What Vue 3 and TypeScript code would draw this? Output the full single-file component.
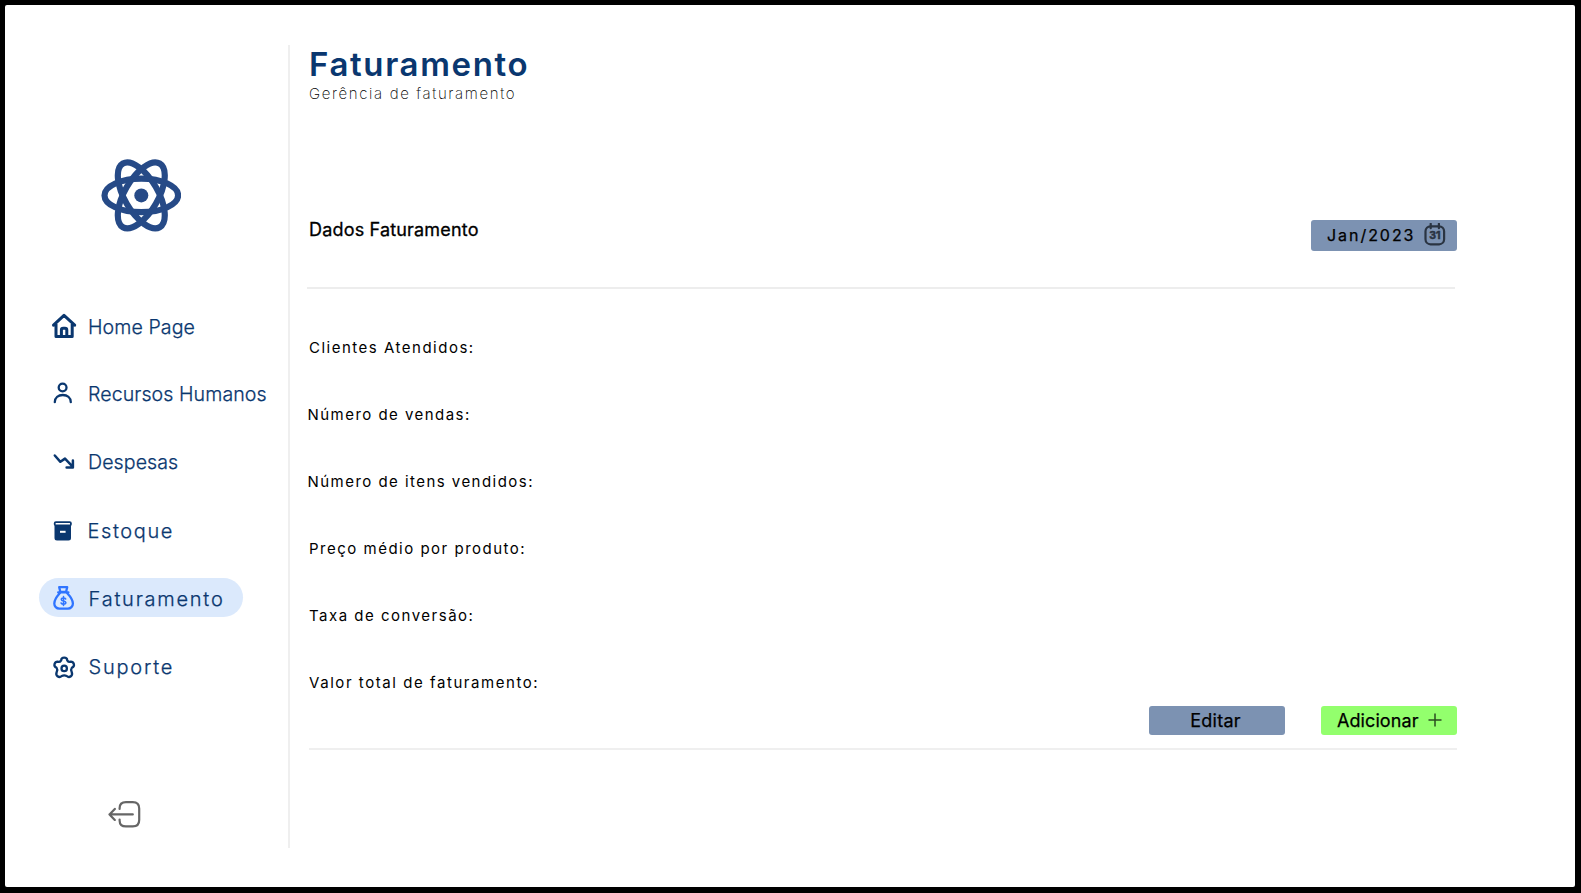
<script setup lang="ts">
interface NavItem {
  id: string
  label: string
}

const navItems: NavItem[] = [
  { id: 'home', label: 'Home Page' },
  { id: 'people', label: 'Recursos Humanos' },
  { id: 'expenses', label: 'Despesas' },
  { id: 'stock', label: 'Estoque' },
  { id: 'billing', label: 'Faturamento' },
  { id: 'support', label: 'Suporte' },
]

const activeId = 'billing'

const fields: { label: string; outdent?: boolean }[] = [
  { label: 'Clientes Atendidos:' },
  { label: 'Número de vendas:', outdent: true },
  { label: 'Número de itens vendidos:', outdent: true },
  { label: 'Preço médio por produto:' },
  { label: 'Taxa de conversão:' },
  { label: 'Valor total de faturamento:' },
]
</script>

<template>
  <div class="frame">
    <div class="screen">
      <aside class="sidebar">
        <svg class="logo" viewBox="0 0 80 74" fill="none" stroke="#264a87" stroke-width="6.2">
          <ellipse cx="40.300" cy="37.400" rx="36.800" ry="16.800" />
          <ellipse cx="40.300" cy="37.400" rx="36.800" ry="16.800" transform="rotate(60 40.300 37.400)" />
          <ellipse cx="40.300" cy="37.400" rx="36.800" ry="16.800" transform="rotate(120 40.300 37.400)" />
          <circle cx="40.300" cy="37.400" r="7" fill="#264a87" stroke="none" />
        </svg>

        <nav class="nav">
          <a
            v-for="item in navItems"
            :key="item.id"
            class="nav-item"
            :class="[item.id, { active: item.id === activeId }]"
          >
            <svg v-if="item.id === 'home'" class="icon" viewBox="0 0 24 24">
              <path d="M1.500 11.200 12 1.400l10.700 9.800M4 10v12.500h16.200v-12.500M9.400 22.500v-6.400a1.800 1.800 0 0 1 1.800-1.800h1.800a1.800 1.800 0 0 1 1.800 1.800v6.400" stroke-width="3" />
            </svg>
            <svg v-else-if="item.id === 'people'" class="icon" viewBox="0 0 24 24">
              <circle cx="10.600" cy="6.500" r="3.900" />
              <path d="M2.800 21.200c0-4.700 3.600-7.200 8-7.200s8 2.500 8 7.200" />
            </svg>
            <svg v-else-if="item.id === 'expenses'" class="icon" viewBox="0 0 24 24">
              <path d="M2.800 6.500l5.600 6.300 4.600-3.200 7.600 8M20.900 11.600v6.800h-6.300" stroke-width="2.500" />
            </svg>
            <svg v-else-if="item.id === 'stock'" class="icon" viewBox="0 0 24 24">
              <rect x="2.700" y="5.100" width="16.200" height="3.400" rx="1.200" stroke-width="1.800" />
              <path class="solid" d="M2.500 8.900h16.500v12.100a2.500 2.500 0 0 1-2.500 2.500h-11.500a2.500 2.500 0 0 1-2.500-2.500z" />
              <path d="M8 14.800h5.600" stroke="#fff" stroke-width="2" stroke-linecap="butt" />
            </svg>
            <svg v-else-if="item.id === 'billing'" class="icon" viewBox="0 0 24 24">
              <path d="M7.200 1.200h8l-1.100 4.600h-5.800zM6.200 6.400h10.200M8.300 6.700c-2.800 3.100-6 6.300-6 10.800a5 5 0 0 0 5 5.100h8.600a5 5 0 0 0 5-5.100c0-4.500-3.400-7.800-6.200-10.800" stroke-width="2.300" />
              <path d="M13.700 13c-.5-.8-1.300-1.100-2.300-1.100-1.200 0-2.100.6-2.100 1.500 0 2.200 4.600.9 4.600 3.200 0 1-1 1.600-2.300 1.600-1.100 0-2-.4-2.500-1.200M11.500 10.600v8.800" stroke-width="1.500" />
            </svg>
            <svg v-else class="icon" viewBox="0 0 24 24">
              <path d="M9.200 6.300Q9.300 3.700 12.200 3.700Q15.100 3.700 15.200 6.300Q16.600 8.500 18.800 7.700Q21 7.600 21.900 10.200Q22.500 12.400 19.800 13.800Q18.500 15.600 19.700 18Q20.800 20.800 18.900 22.300Q16.600 23.900 14.700 22Q12.200 20.900 9.700 22Q7.800 23.900 5.500 22.300Q3.600 20.800 4.700 18Q5.900 15.600 4.600 13.800Q1.900 12.400 2.500 10.200Q3.400 7.600 5.600 7.700Q7.800 8.500 9.200 6.300Z" />
              <circle cx="12.200" cy="14.400" r="2.700" />
            </svg>
            <span class="nav-label">{{ item.label }}</span>
          </a>
        </nav>

        <svg class="logout" viewBox="0 0 34 28">
          <path d="M11.600 9v-.8q0-6 6.400-6h6.800q6.400 0 6.400 6.400v11.400q0 6.400-6.400 6.400h-6.800q-6.400 0-6.400-6v-.8M24.800 14.400h-23.300M6.800 8.900l-5.300 5.500 5.300 5.500" />
        </svg>
      </aside>

      <main class="content">
        <h1 class="title">Faturamento</h1>
        <p class="subtitle">Gerência de faturamento</p>

        <header class="section-head">
          <h2 class="section-title">Dados Faturamento</h2>
          <button class="month">
            <span>Jan/2023</span>
            <svg class="calendar" viewBox="0 0 22 24">
              <rect x="1.500" y="3.300" width="18.600" height="18" rx="5" />
              <path d="M6.700 .8v4.400M14.900 .8v4.400" />
              <text x="10.800" y="16.100" text-anchor="middle">31</text>
            </svg>
          </button>
        </header>

        <ul class="fields">
          <li v-for="field in fields" :key="field.label" :class="{ outdent: field.outdent }">
            {{ field.label }}
          </li>
        </ul>

        <footer class="actions">
          <button class="edit">Editar</button>
          <button class="add">
            <span>Adicionar</span>
            <svg class="plus" viewBox="0 0 14 14"><path d="M7 .5v13M.5 7h13" /></svg>
          </button>
        </footer>
      </main>
    </div>
  </div>
</template>

<style>
body {
  margin: 0;
  background: #000;
}
</style>

<style scoped>
.frame {
  box-sizing: border-box;
  width: 1581px;
  height: 893px;
  padding: 5px 6.500px 6px 5px;
  background: #000;
  font-family: Inter, sans-serif;
}

.screen {
  display: flex;
  box-sizing: border-box;
  height: 882px;
  padding: 40px 0 39px;
  border-radius: 2px;
  background: #fff;
}

.sidebar {
  display: flex;
  flex-direction: column;
  box-sizing: border-box;
  width: 285px;
  flex: none;
  border-right: 2px solid #efefef;
}

.logo {
  width: 80px;
  height: 74px;
  margin: 113px 0 0 96px;
}

.nav {
  display: flex;
  flex-direction: column;
  gap: 29.300px;
  margin: 74.200px 0 0 34px;
}

.nav-item {
  display: flex;
  align-items: center;
  box-sizing: border-box;
  height: 39px;
  padding-left: 13px;
  color: #0a376f;
  font-size: 20px;
  font-weight: 300;
  letter-spacing: 1.750px;
  white-space: nowrap;
}

.nav-item.home,
.nav-item.people,
.nav-item.expenses {
  font-size: 19.600px;
  letter-spacing: 0.070px;
}

.nav-item.home {
  margin-bottom: -1.300px;
}

.nav-item.active {
  width: 204px;
  border-radius: 20px;
  background: #dbe9fc;
}

.icon {
  width: 24px;
  height: 24px;
  margin-right: 12px;
  flex: none;
  overflow: visible;
  fill: none;
  stroke: #0a376f;
  stroke-width: 2.300;
  stroke-linecap: round;
  stroke-linejoin: round;
}

.icon .solid {
  fill: #0a376f;
  stroke: none;
}

.active .icon {
  stroke: #2f74ff;
}

.nav-label {
  padding-top: 2px;
  -webkit-text-stroke: 0.250px currentColor;
}

.stock .nav-label,
.billing .nav-label,
.support .nav-label {
  padding-top: 3px;
}

.stock .nav-label {
  letter-spacing: 1.600px;
}

.stock .icon {
  margin-right: 11.500px;
}

.billing .nav-label,
.support .nav-label {
  margin-left: 0.600px;
}

.logout {
  width: 34px;
  height: 28px;
  margin: auto 0 20px 102.500px;
  fill: none;
  stroke: #666;
  stroke-width: 2.200;
  stroke-linecap: round;
  stroke-linejoin: round;
}

.content {
  display: flex;
  flex-direction: column;
  width: 1148px;
  margin-left: 19px;
}

.title {
  margin: -1px 0 0;
  color: #0a376f;
  font-size: 33px;
  font-weight: 600;
  line-height: 40px;
  letter-spacing: 1.640px;
}

.subtitle {
  margin: 0;
  color: #000;
  font-size: 15px;
  font-weight: 200;
  line-height: 20px;
  letter-spacing: 1.640px;
}

.section-head {
  display: flex;
  align-items: flex-start;
  justify-content: space-between;
  box-sizing: border-box;
  height: 69px;
  margin: 116px 2px 0 -2px;
  padding-left: 2px;
  border-bottom: 2px solid #ededed;
}

.section-title {
  margin: 0;
  font-size: 18px;
  font-weight: 400;
  line-height: 20px;
  letter-spacing: 0.180px;
  -webkit-text-stroke: 0.300px currentColor;
}

button {
  display: flex;
  align-items: center;
  justify-content: center;
  box-sizing: border-box;
  padding: 0;
  border: 0;
  border-radius: 3px;
  background: #7c92b2;
  color: #000;
  font-family: inherit;
  font-size: 18px;
  font-weight: 400;
  -webkit-text-stroke: 0.250px currentColor;
}

.month {
  justify-content: flex-start;
  gap: 8.500px;
  width: 146px;
  height: 31px;
  margin-right: -2px;
  padding: 0 0 1px 16px;
  font-size: 16px;
  letter-spacing: 1.950px;
  -webkit-text-stroke: 0.250px currentColor;
}

.calendar {
  width: 22px;
  height: 24px;
  margin-top: -1px;
  fill: none;
  stroke: #2a3442;
  stroke-width: 2.200;
  stroke-linecap: round;
}

.calendar text {
  fill: #2a3442;
  stroke-width: 0.500;
  font-size: 10.500px;
  font-weight: 700;
  letter-spacing: 0;
  -webkit-text-stroke: 0.500px #2a3442;
}

.fields {
  margin: 24.600px 0 0;
  padding: 0;
  list-style: none;
}

.fields li {
  height: 67.100px;
  font-size: 15px;
  font-weight: 400;
  line-height: 67px;
  letter-spacing: 1.500px;
}

.fields .outdent {
  margin-left: -1.500px;
  letter-spacing: 1.460px;
}

.fields li:last-child {
  letter-spacing: 1.560px;
}

.actions {
  display: flex;
  justify-content: flex-end;
  gap: 36px;
  box-sizing: border-box;
  height: 44px;
  margin-top: -10.200px;
  border-bottom: 2px solid #efefef;
}

.edit,
.add {
  width: 136px;
  height: 29px;
}

.edit {
  padding-right: 3px;
  letter-spacing: 0.250px;
}

.add {
  gap: 9.500px;
  padding-left: 1px;
  background: #93ff6d;
  letter-spacing: 0.100px;
}

.plus {
  width: 14px;
  height: 14px;
  fill: none;
  stroke: #2b4c20;
  stroke-width: 1.500;
}
</style>
